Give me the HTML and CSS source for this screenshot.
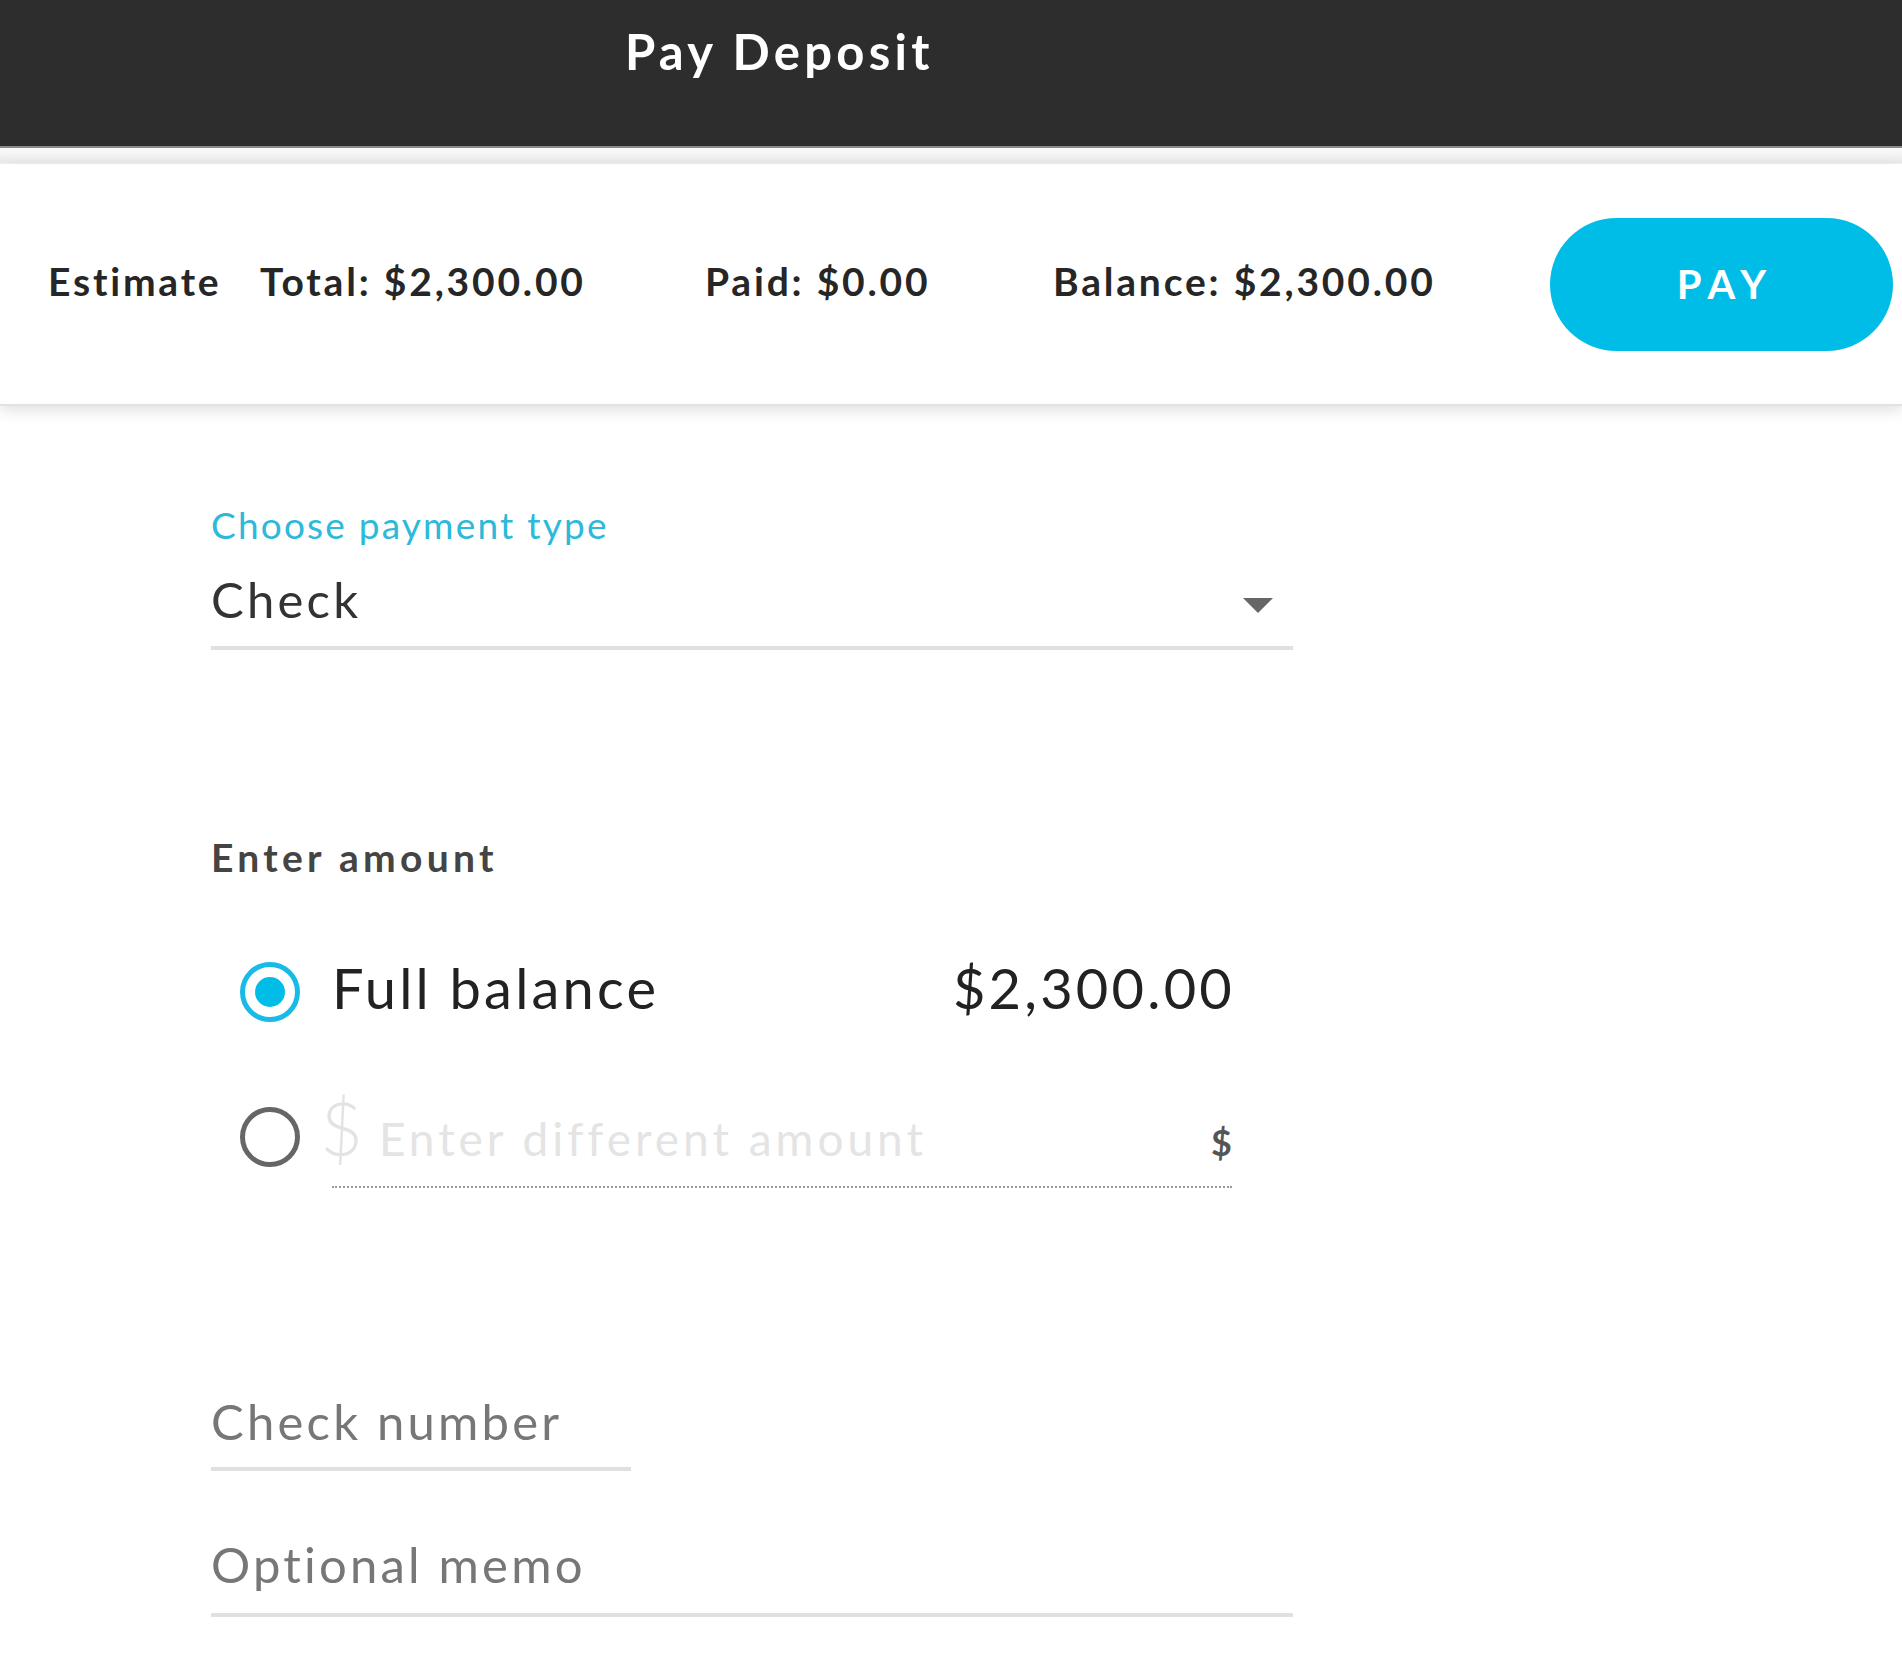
FILE: index.html
```html
<!DOCTYPE html>
<html lang="en">
<head>
<meta charset="utf-8">
<title>Pay Deposit</title>
<link rel="stylesheet" href="styles.css">
</head>
<body>
  <header class="topbar">
    <h1 class="topbar-title">Pay Deposit</h1>
  </header>
  <div class="topbar-fade"></div>

  <section class="summary">
    <span class="summary-item">Estimate</span>
    <span class="summary-item">Total: $2,300.00</span>
    <span class="summary-item">Paid: $0.00</span>
    <span class="summary-item">Balance: $2,300.00</span>
    <button class="pay-button" type="button">PAY</button>
  </section>

  <main class="form">
    <div class="select-field">
      <div class="field-label">Choose payment type</div>
      <div class="select-row">
        <span class="select-value">Check</span>
        <span class="select-caret"></span>
      </div>
    </div>

    <h2 class="section-title">Enter amount</h2>

    <div class="amount-option amount-option-full">
      <span class="radio radio-checked"><span class="radio-dot"></span></span>
      <span class="option-label">Full balance</span>
      <span class="option-value">$2,300.00</span>
    </div>

    <div class="amount-option amount-option-custom">
      <span class="radio"></span>
      <div class="money-input">
        <span class="money-prefix">$</span>
        <span class="money-placeholder">Enter different amount</span>
        <span class="money-suffix">$</span>
      </div>
    </div>

    <div class="text-field text-field-short">Check number</div>
    <div class="text-field text-field-memo">Optional memo</div>
  </main>
</body>
</html>
```

FILE: styles.css
```css
* {
  box-sizing: border-box;
}

body {
  margin: 0;
  background: #ffffff;
  font-family: Lato, "Open Sans", "Liberation Sans", sans-serif;
  color: #222222;
}

/* dark title bar */
.topbar {
  height: 148px;
  background: #2d2d2d;
  border-bottom: 2px solid #8a8a8a;
  padding: 21px 0 0 625px;
}

.topbar-title {
  margin: 0;
  font-size: 49px;
  line-height: 60px;
  font-weight: 700;
  color: #ffffff;
  letter-spacing: 4.3px;
}

.topbar-fade {
  height: 16px;
  background: linear-gradient(#fbfbfb, #ececec 85%, #f4f4f4);
}

/* totals strip */
.summary {
  height: 242px;
  display: grid;
  grid-template-columns: 212px 445px 348px 497px 343px;
  align-items: center;
  padding-left: 48px;
  background: #ffffff;
  border-bottom: 2px solid #e2e2e2;
  box-shadow: 0 4px 14px rgba(0, 0, 0, 0.13);
  position: relative;
}

.summary-item {
  margin-bottom: 6px;
  font-size: 39px;
  font-weight: 700;
  color: #262626;
  letter-spacing: 2.8px;
  white-space: nowrap;
}

.pay-button {
  width: 343px;
  height: 133px;
  border: none;
  border-radius: 67px;
  background: #00bde8;
  color: #ffffff;
  font-family: inherit;
  font-size: 40px;
  font-weight: 700;
  letter-spacing: 8px;
  padding: 0 0 0 8px;
}

/* payment form */
.form {
  width: 1293px;
  padding: 97px 0 60px 211px;
}

.field-label {
  font-size: 37px;
  line-height: 44px;
  color: #2cb9da;
  letter-spacing: 2.2px;
}

.select-row {
  margin-top: 22px;
  height: 81px;
  display: flex;
  align-items: flex-start;
  justify-content: space-between;
  padding-right: 20px;
  border-bottom: 4px solid #e0e0e0;
}

.select-value {
  font-size: 49px;
  line-height: 60px;
  color: #333333;
  letter-spacing: 3.2px;
}

.select-caret {
  margin-top: 29px;
  width: 0;
  height: 0;
  border-left: 15px solid transparent;
  border-right: 15px solid transparent;
  border-top: 15px solid #666666;
}

.section-title {
  margin: 184px 0 0;
  font-size: 39px;
  line-height: 47px;
  font-weight: 700;
  color: #444444;
  letter-spacing: 4.3px;
}

.amount-option {
  display: flex;
  align-items: flex-start;
  padding: 0 61px 0 29px;
}

.amount-option-full {
  margin-top: 74px;
  height: 74px;
}

.radio {
  flex: none;
  width: 60px;
  height: 60px;
  margin-top: 7px;
  border-radius: 50%;
  border: 5px solid #666666;
  display: flex;
  align-items: center;
  justify-content: center;
}

.radio-checked {
  border-color: #19bbe6;
}

.radio-dot {
  width: 30px;
  height: 30px;
  border-radius: 50%;
  background: #00bde8;
}

.option-label {
  margin-left: 32px;
  font-size: 56px;
  line-height: 66px;
  color: #222222;
  letter-spacing: 3.2px;
}

.option-value {
  margin-left: auto;
  margin-right: -3px;
  font-size: 56px;
  line-height: 66px;
  color: #222222;
  letter-spacing: 3.2px;
}

.amount-option-custom {
  margin-top: 71px;
}

.money-input {
  flex: 1;
  margin-left: 32px;
  height: 88px;
  display: flex;
  align-items: baseline;
  border-bottom: 2px dotted #9a9a9a;
}

.money-prefix {
  margin-left: -12px;
  font-size: 74px;
  line-height: 56px;
  font-weight: 300;
  color: #e3e3e3;
}

.money-placeholder {
  margin-left: 16px;
  font-size: 46px;
  line-height: 56px;
  color: #e4e4e4;
  letter-spacing: 4px;
}

.money-suffix {
  margin-left: auto;
  font-size: 36px;
  line-height: 56px;
  font-weight: 700;
  color: #555555;
}

.text-field {
  font-size: 49px;
  line-height: 60px;
  color: #777777;
  letter-spacing: 3.2px;
  border-bottom: 4px solid #e0e0e0;
}

.text-field-short {
  width: 420px;
  margin-top: 203px;
  padding-bottom: 16px;
}

.text-field-memo {
  width: 1082px;
  margin-top: 63px;
  padding-bottom: 19px;
}
```
